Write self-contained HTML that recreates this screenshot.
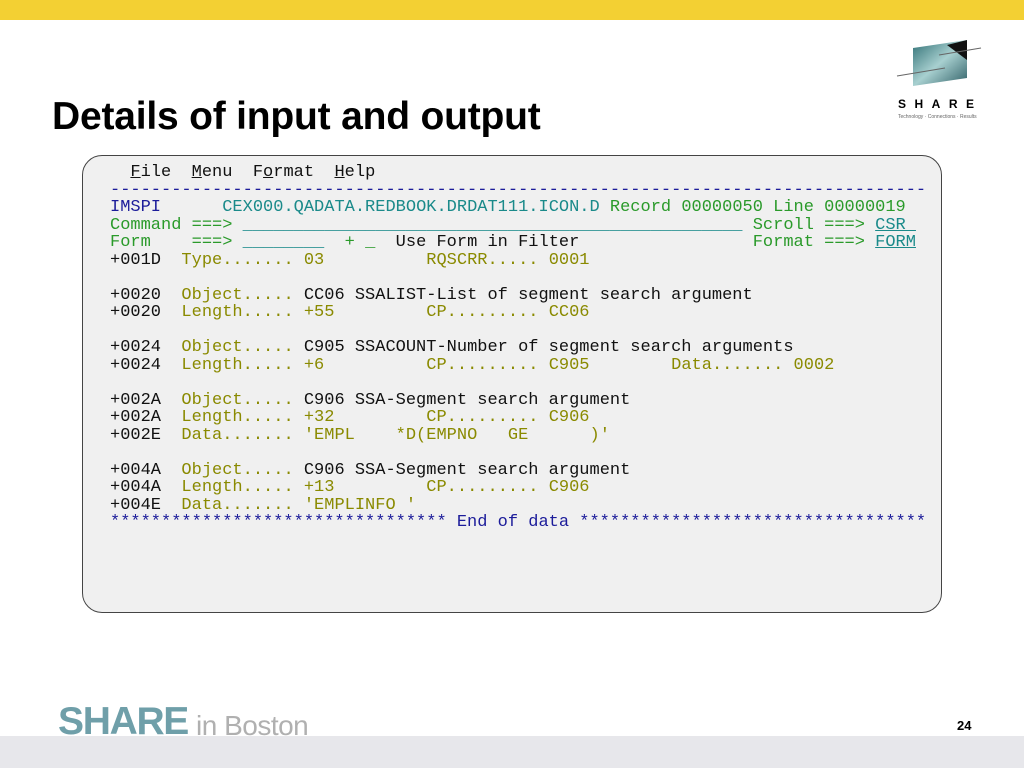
<!DOCTYPE html>
<html><head><meta charset="utf-8"><style>
body{margin:0;width:1024px;height:768px;position:relative;background:#fff;overflow:hidden;font-family:"Liberation Sans",sans-serif}
.top{position:absolute;left:0;top:0;width:1024px;height:20px;background:#f3d033}
.bot{position:absolute;left:0;top:736px;width:1024px;height:32px;background:#e7e7eb}
h1{position:absolute;left:52px;top:95px;margin:0;font-size:39px;font-weight:bold;color:#000;letter-spacing:-0.2px}
.box{position:absolute;left:82px;top:155px;width:858px;height:456px;border:1.5px solid #444;border-radius:20px;background:#f0f0f0}
pre{position:absolute;left:110px;top:164px;margin:0;font-family:"Liberation Mono",monospace;font-size:17px;letter-spacing:0px;line-height:17.5px;color:#111}
.b{color:#1c1c9a}.t{color:#1a8a8a}.g{color:#2a9a2a}.o{color:#8a8a00}.u{text-decoration:underline}
.share{position:absolute;left:58px;top:700px;font-size:39px;font-weight:bold;color:#6f9fa9;letter-spacing:-1.3px}
.inb{position:absolute;left:196px;top:710px;font-size:28px;color:#b0b0b0;letter-spacing:-0.5px}
.pg{position:absolute;left:957px;top:718px;font-size:13px;font-weight:bold}
</style></head><body>
<div class="top"></div>
<div class="bot"></div>
<h1>Details of input and output</h1>
<svg style="position:absolute;left:895px;top:36px" width="90" height="86" viewBox="0 0 90 86">
<defs><linearGradient id="gg" x1="0" y1="0" x2="1" y2="1"><stop offset="0" stop-color="#2f6f74"/><stop offset="0.5" stop-color="#a8d0d0"/><stop offset="1" stop-color="#2f5f66"/></linearGradient></defs>
<polygon points="18,12 72,4 72,42 18,50" fill="url(#gg)"/>
<polygon points="52,9 72,4 72,24" fill="#111"/>
<line x1="2" y1="40" x2="50" y2="32" stroke="#666" stroke-width="1"/>
<line x1="44" y1="19" x2="86" y2="12" stroke="#666" stroke-width="1"/>
<text x="3" y="72" font-family="Liberation Sans" font-weight="bold" font-size="12" letter-spacing="8.5">SHARE</text>
<text x="3" y="82" font-family="Liberation Sans" font-size="5" fill="#666">Technology · Connections · Results</text>
</svg>
<div class="box"></div>
<pre>  <span class="u">F</span>ile  <span class="u">M</span>enu  F<span class="u">o</span>rmat  <span class="u">H</span>elp
<span class="b">--------------------------------------------------------------------------------</span>
<span class="b">IMSPI</span>      <span class="t">CEX000.QADATA.REDBOOK.DRDAT111.ICON.D</span> <span class="g">Record 00000050 Line 00000019</span>
<span class="g">Command ===> </span><span class="t">_________________________________________________</span><span class="g"> Scroll ===> </span><span class="t u">CSR </span>
<span class="g">Form    ===> </span><span class="t">________</span>  <span class="g">+</span> <span class="g">_</span>  Use Form in Filter                 <span class="g">Format ===> </span><span class="t u">FORM</span>
+001D  <span class="o">Type.......</span> <span class="o">03</span>          <span class="o">RQSCRR.....</span> <span class="o">0001</span>

+0020  <span class="o">Object.....</span> CC06 SSALIST-List of segment search argument
+0020  <span class="o">Length.....</span> <span class="o">+55</span>         <span class="o">CP.........</span> <span class="o">CC06</span>

+0024  <span class="o">Object.....</span> C905 SSACOUNT-Number of segment search arguments
+0024  <span class="o">Length.....</span> <span class="o">+6</span>          <span class="o">CP.........</span> <span class="o">C905</span>        <span class="o">Data....... 0002</span>

+002A  <span class="o">Object.....</span> C906 SSA-Segment search argument
+002A  <span class="o">Length.....</span> <span class="o">+32</span>         <span class="o">CP.........</span> <span class="o">C906</span>
+002E  <span class="o">Data.......</span> <span class="o">'EMPL    *D(EMPNO   GE      )'</span>

+004A  <span class="o">Object.....</span> C906 SSA-Segment search argument
+004A  <span class="o">Length.....</span> <span class="o">+13</span>         <span class="o">CP.........</span> <span class="o">C906</span>
+004E  <span class="o">Data.......</span> <span class="o">'EMPLINFO '</span>
<span class="b">********************************* End of data **********************************</span></pre>
<div class="share">SHARE</div>
<div class="inb">in Boston</div>
<div class="pg">24</div>
</body></html>
